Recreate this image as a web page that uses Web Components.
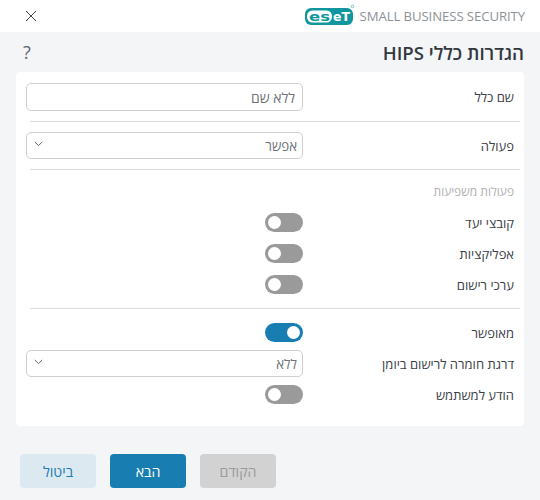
<!DOCTYPE html>
<html lang="he" dir="rtl">
<head>
<meta charset="utf-8">
<title>HIPS</title>
<style>
  html, body { margin: 0; height: 100%; }
  body {
    background: #f3f5f7;
    color: #3b4047;
    font-family: "Open Sans", "Liberation Sans", sans-serif;
    font-size: 13px;
  }
  body { display: flex; flex-direction: column; width: 540px; height: 500px; overflow: hidden; }
</style>
</head>
<body>
  <app-header></app-header>
  <page-title>הגדרות כללי HIPS</page-title>
  <form-card>
    <form-row label="שם כלל"><text-box value="ללא שם"></text-box></form-row>
    <form-sep></form-sep>
    <form-row label="פעולה"><select-box value="אפשר"></select-box></form-row>
    <form-sep></form-sep>
    <form-heading>פעולות משפיעות</form-heading>
    <form-row label="קובצי יעד" tall><toggle-switch></toggle-switch></form-row>
    <form-row label="אפליקציות" tall><toggle-switch></toggle-switch></form-row>
    <form-row label="ערכי רישום" tall><toggle-switch></toggle-switch></form-row>
    <form-sep tight></form-sep>
    <form-row label="מאופשר" tall><toggle-switch on></toggle-switch></form-row>
    <form-row label="דרגת חומרה לרישום ביומן" tall><select-box value="ללא"></select-box></form-row>
    <form-row label="הודע למשתמש" tall><toggle-switch></toggle-switch></form-row>
  </form-card>
  <button-bar>
    <app-button kind="off">הקודם</app-button>
    <app-button kind="main">הבא</app-button>
    <app-button kind="soft">ביטול</app-button>
  </button-bar>

<script>
  function makeShadow(el, html) {
    el.attachShadow({ mode: "open" }).innerHTML = html;
  }

  class AppHeader extends HTMLElement {
    connectedCallback() {
      makeShadow(this, `
        <style>
          :host { display: flex; align-items: center; height: 32px; background: #fff; padding: 0 15px 0 25px; flex: none; }
          .brand { display: flex; align-items: center; gap: 7px; direction: ltr; }
          .name { font-size: 13.2px; color: #8e9297; letter-spacing: -.1px; white-space: nowrap; }
          .close { margin-inline-start: auto; display: block; }
          svg { display: block; }
          .logo { overflow: visible; margin-top: 1px; }
        </style>
        <div class="brand">
          <svg class="logo" width="48" height="17" viewBox="0 0 48 17">
            <rect x="0" y="0" width="48" height="17" rx="6" fill="#10969f"/>
            <rect x="2" y="2.5" width="25" height="12" rx="5.5" fill="#fff"/>
            <circle cx="47.5" cy="-1.5" r="1.3" fill="none" stroke="#10969f" stroke-width=".5"/>
            <text x="4" y="13" font-family="'DejaVu Sans'" font-weight="700" font-size="12" fill="#10969f" textLength="21" lengthAdjust="spacingAndGlyphs">es</text>
            <text x="28" y="13" font-family="'DejaVu Sans'" font-weight="700" font-size="12.5" fill="#fff" textLength="17" lengthAdjust="spacingAndGlyphs">eT</text>
          </svg>
          <span class="name">SMALL BUSINESS SECURITY</span>
        </div>
        <svg class="close" width="12" height="12" viewBox="0 0 12 12"><path d="M1 1 11 11M11 1 1 11" stroke="#3b4047" stroke-width="1" fill="none"/></svg>
      `);
    }
  }

  class PageTitle extends HTMLElement {
    connectedCallback() {
      makeShadow(this, `
        <style>
          :host { display: flex; align-items: center; justify-content: space-between; height: 40px; padding: 0 16px 0 23px; flex: none; }
          .title { font-size: 18.6px; font-weight: 600; color: #33383f; }
          .help { font-size: 18px; color: #5a6570; }
        </style>
        <span class="title"><slot></slot></span>
        <span class="help">?</span>
      `);
    }
  }

  class FormCard extends HTMLElement {
    connectedCallback() {
      makeShadow(this, `
        <style>
          :host { display: flex; flex-direction: column; background: #fff; border-radius: 4px; margin: 0 16px; padding: 11px 0 0; height: 343px; flex: none; }
        </style>
        <slot></slot>
      `);
    }
  }

  class FormRow extends HTMLElement {
    connectedCallback() {
      const height = this.hasAttribute("tall") ? "31px" : "auto";
      makeShadow(this, `
        <style>
          :host { display: grid; grid-template-columns: 1fr 277px; align-items: center; height: ${height}; padding: 0 10px; }
          .control { display: flex; justify-content: flex-start; }
        </style>
        <span class="label">${this.getAttribute("label")}</span>
        <div class="control"><slot></slot></div>
      `);
    }
  }

  class FormSep extends HTMLElement {
    connectedCallback() {
      const gap = this.hasAttribute("tight") ? 8 : 10;
      makeShadow(this, `
        <style>
          :host { display: block; flex: none; height: 1px; background: #dcdcdc; margin: ${gap}px 4px ${gap}px 14px; }
        </style>
      `);
    }
  }

  class FormHeading extends HTMLElement {
    connectedCallback() {
      makeShadow(this, `
        <style>
          :host { display: block; flex: none; height: 27px; line-height: 24px; padding: 0 10px; font-size: 12px; color: #aeb0b3; }
        </style>
        <slot></slot>
      `);
    }
  }

  class TextBox extends HTMLElement {
    connectedCallback() {
      makeShadow(this, `
        <style>
          :host { display: flex; align-items: center; width: 100%; box-sizing: border-box; height: 28px; border: 1px solid #cfcfcf; border-radius: 5px; padding: 0 7px; font-size: 14px; color: #6e7277; background: #fff; }
        </style>
        ${this.getAttribute("value")}
      `);
    }
  }

  class SelectBox extends HTMLElement {
    connectedCallback() {
      makeShadow(this, `
        <style>
          :host { display: flex; align-items: center; justify-content: space-between; width: 100%; box-sizing: border-box; height: 27px; border: 1px solid #cfcfcf; border-radius: 5px; padding: 0 5px 0 7px; font-size: 13.3px; color: #6e7277; background: #fff; }
          svg { display: block; margin-top: -3px; }
        </style>
        <span>${this.getAttribute("value")}</span>
        <svg width="9" height="6" viewBox="0 0 9 6"><path d="M.8 1 4.5 4.6 8.2 1" stroke="#5f6368" stroke-width="1" fill="none"/></svg>
      `);
    }
  }

  class ToggleSwitch extends HTMLElement {
    connectedCallback() {
      const on = this.hasAttribute("on");
      makeShadow(this, `
        <style>
          :host { display: flex; align-items: center; width: 38px; height: 19px; box-sizing: border-box; padding: 0 3px; border-radius: 10px; background: ${on ? "#187db0" : "#9a9a9a"}; direction: ${on ? "rtl" : "ltr"}; }
          .knob { width: 13px; height: 13px; border-radius: 50%; background: #fff; }
        </style>
        <div class="knob"></div>
      `);
    }
  }

  class ButtonBar extends HTMLElement {
    connectedCallback() {
      makeShadow(this, `
        <style>
          :host { display: flex; justify-content: flex-end; gap: 14px; padding: 28px 20px 0; flex: none; }
        </style>
        <slot></slot>
      `);
    }
  }

  const buttonColors = {
    off: ["#d2d2d2", "#9a9a9a"],
    main: ["#187db0", "#fff"],
    soft: ["#dde9f0", "#187db0"],
  };

  class AppButton extends HTMLElement {
    connectedCallback() {
      const [bg, fg] = buttonColors[this.getAttribute("kind")];
      makeShadow(this, `
        <style>
          :host { display: flex; align-items: center; justify-content: center; width: 76px; height: 34px; border-radius: 4px; background: ${bg}; color: ${fg}; font-size: 14.2px; font-weight: 500; }
        </style>
        <slot></slot>
      `);
    }
  }

  customElements.define("app-header", AppHeader);
  customElements.define("page-title", PageTitle);
  customElements.define("form-card", FormCard);
  customElements.define("form-row", FormRow);
  customElements.define("form-sep", FormSep);
  customElements.define("form-heading", FormHeading);
  customElements.define("text-box", TextBox);
  customElements.define("select-box", SelectBox);
  customElements.define("toggle-switch", ToggleSwitch);
  customElements.define("button-bar", ButtonBar);
  customElements.define("app-button", AppButton);
</script>
</body>
</html>
